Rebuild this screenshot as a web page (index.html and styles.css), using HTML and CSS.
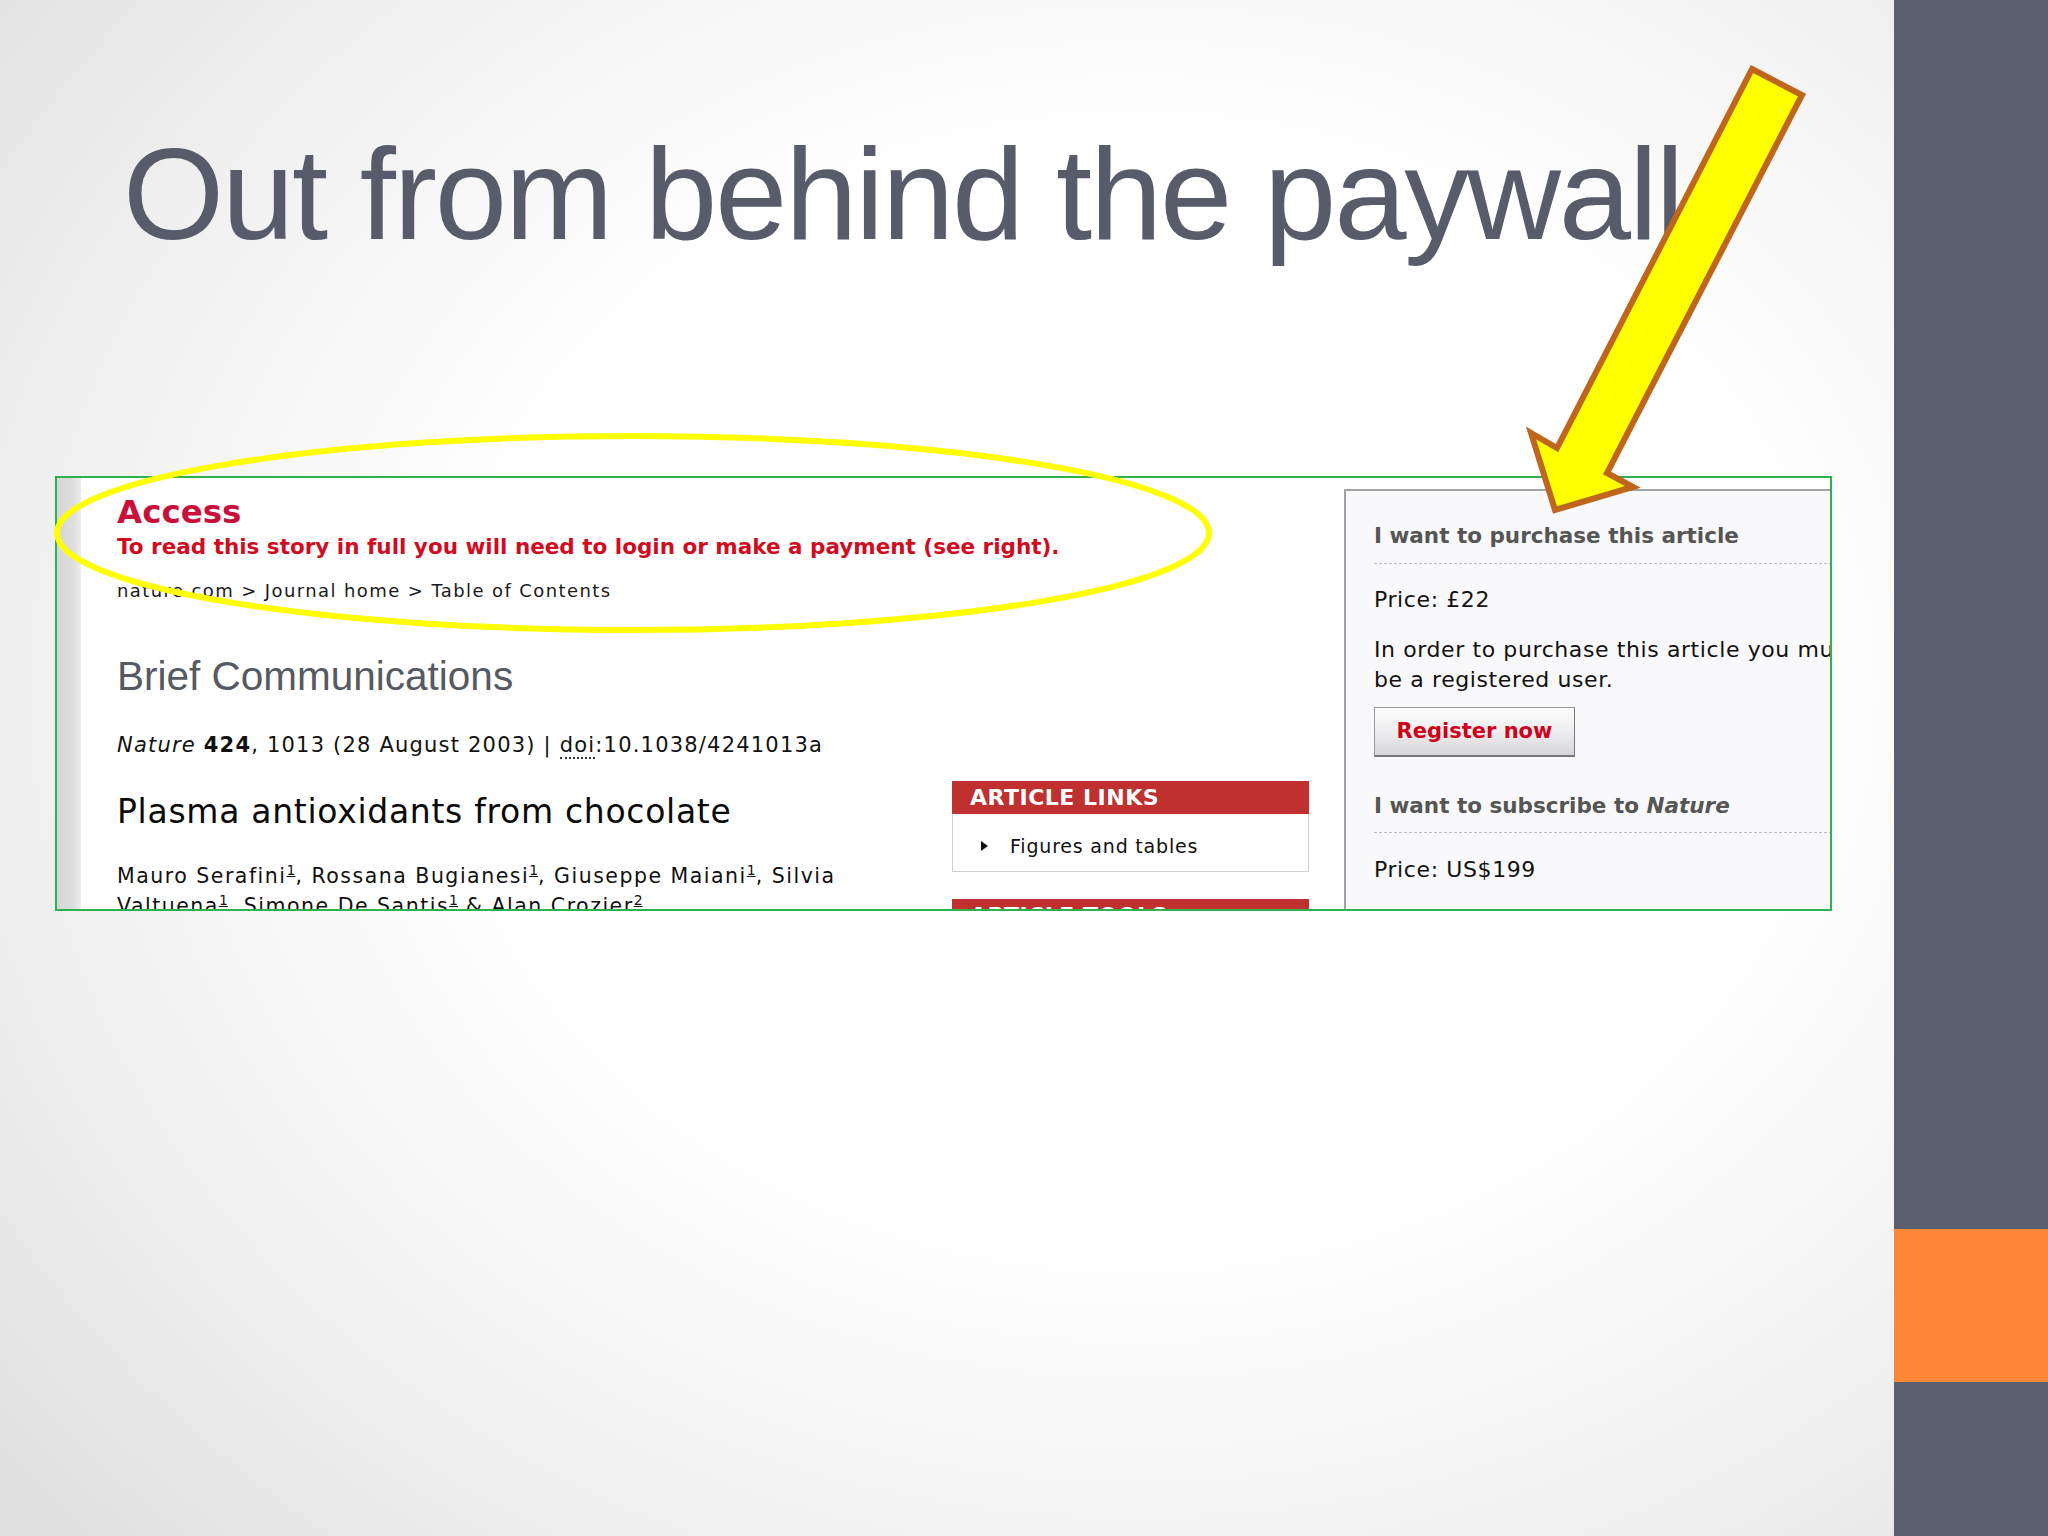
FILE: index.html
```html
<!DOCTYPE html>
<html>
<head>
<meta charset="utf-8">
<title>Out from behind the paywall</title>
<link rel="stylesheet" href="styles.css">
</head>
<body>
<div class="slide">
  <div class="stage">
    <h1 class="title">Out from behind the paywall</h1>
    <div class="shot">
      <div class="strip"></div>
      <div class="main">
        <div class="access">Access</div>
        <div class="access-msg">To read this story in full you will need to login or make a payment (see right).</div>
        <div class="crumbs">nature.com &gt; Journal home &gt; Table of Contents</div>
        <div class="section">Brief Communications</div>
        <div class="cite"><i>Nature</i> <b>424</b>, 1013 (28 August 2003) | <span class="abbr">doi</span>:10.1038/4241013a</div>
        <div class="article-row">
          <div class="article-col">
            <div class="art-title">Plasma antioxidants from chocolate</div>
            <div class="authors">Mauro Serafini<sup class="ref">1</sup>, Rossana Bugianesi<sup class="ref">1</sup>, Giuseppe Maiani<sup class="ref">1</sup>, Silvia Valtuena<sup class="ref">1</sup>, Simone De Santis<sup class="ref">1</sup> &amp; Alan Crozier<sup class="ref">2</sup></div>
          </div>
          <div class="links-col">
            <div class="box-head">ARTICLE LINKS</div>
            <div class="box-body"><div class="bullet">Figures and tables</div></div>
            <div class="box-head second">ARTICLE TOOLS</div>
          </div>
        </div>
      </div>
      <div class="panel">
        <div class="panel-head">I want to purchase this article</div>
        <div class="price first">Price: £22</div>
        <p class="note">In order to purchase this article you must be a registered user.</p>
        <div class="btn">Register now</div>
        <div class="panel-head sub">I want to subscribe to <i>Nature</i></div>
        <div class="price">Price: US$199</div>
      </div>
    </div>
    <svg class="overlay" width="1894" height="1536" viewBox="0 0 1894 1536">
      <ellipse cx="633" cy="533" rx="576" ry="97" fill="none" stroke="#ffff00" stroke-width="6"/>
      <polygon points="1752,69 1802,95 1607,473 1633,487 1555,510 1531,433 1557,448" fill="#ffff00" stroke="#bf661c" stroke-width="6" stroke-linejoin="miter"/>
    </svg>
  </div>
  <div class="sidebar">
    <div class="bar-top"></div>
    <div class="bar-accent"></div>
    <div class="bar-bottom"></div>
  </div>
</div>
</body>
</html>
```

FILE: styles.css
```css
html, body {
  margin: 0;
  padding: 0;
}
body {
  width: 2048px;
  height: 1536px;
  overflow: hidden;
  font-family: "DejaVu Sans", Verdana, sans-serif;
}
.slide {
  width: 2048px;
  height: 1536px;
  display: grid;
  grid-template-columns: 1894px 154px;
}
.stage {
  position: relative;
  background: radial-gradient(ellipse 78% 80% at 60% 45%, #ffffff 45%, #f2f2f2 72%, #e0e0e0 100%);
  padding-top: 129px;
  box-sizing: border-box;
  overflow: hidden;
}
.title {
  margin: 0;
  padding-left: 123px;
  height: 130px;
  font-family: "Liberation Sans", Arial, sans-serif;
  font-weight: normal;
  font-size: 130px;
  line-height: 130px;
  letter-spacing: -2.2px;
  color: #575b6a;
  white-space: nowrap;
}
.shot {
  margin-top: 217px;
  margin-left: 55px;
  width: 1777px;
  height: 435px;
  box-sizing: border-box;
  border: 2px solid #2db24e;
  background: #ffffff;
  display: flex;
  overflow: hidden;
}
.strip {
  flex: none;
  width: 24px;
  background: linear-gradient(to right, #d6d6d6, #dedede 70%, #eeeeee);
}
.main {
  flex: none;
  width: 1228px;
  box-sizing: border-box;
  padding-left: 36px;
  padding-top: 16px;
  color: #111;
}
.access {
  font-weight: bold;
  font-size: 32.5px;
  line-height: 36px;
  color: #c8103a;
}
.access-msg {
  margin-top: 4px;
  font-weight: bold;
  font-size: 21.5px;
  line-height: 26px;
  color: #d20c1e;
  white-space: nowrap;
}
.crumbs {
  margin-top: 19px;
  font-size: 18px;
  letter-spacing: 1.4px;
  line-height: 24px;
  color: #1a1a1a;
  white-space: nowrap;
}
.section {
  margin-top: 50px;
  font-family: "Liberation Sans", Arial, sans-serif;
  font-size: 40.5px;
  line-height: 46px;
  color: #555a62;
}
.cite {
  margin-top: 33px;
  font-size: 21px;
  letter-spacing: 1.2px;
  line-height: 26px;
  color: #111;
  white-space: nowrap;
}
.abbr {
  border-bottom: 2px dotted #333;
}
.article-row {
  margin-top: 23px;
  display: flex;
  gap: 75px;
}
.article-col {
  flex: none;
  width: 760px;
  padding-top: 13px;
}
.art-title {
  font-size: 33px;
  letter-spacing: 0.7px;
  line-height: 36px;
  color: #0a0a0a;
  white-space: nowrap;
}
.authors {
  margin-top: 31px;
  font-size: 20.5px;
  letter-spacing: 1.5px;
  line-height: 30px;
  color: #111;
}
.ref {
  font-size: 14px;
  line-height: 0;
  letter-spacing: 0;
  text-decoration: underline;
}
.links-col {
  flex: none;
  width: 357px;
}
.box-head {
  height: 33px;
  line-height: 33px;
  padding-left: 18px;
  background: #c0302f;
  color: #ffffff;
  font-weight: bold;
  font-size: 22px;
  letter-spacing: 0.5px;
  white-space: nowrap;
}
.box-head.second {
  margin-top: 27px;
}
.box-body {
  height: 58px;
  box-sizing: border-box;
  border: 1px solid #cfcfcf;
  border-top: none;
  padding: 20px 0 0 28px;
}
.bullet {
  display: flex;
  align-items: center;
  gap: 22px;
  font-size: 19px;
  letter-spacing: 0.8px;
  line-height: 24px;
  color: #111;
}
.bullet::before {
  content: "";
  width: 0;
  height: 0;
  border-top: 5px solid transparent;
  border-bottom: 5px solid transparent;
  border-left: 7px solid #111;
}
.panel {
  flex: none;
  align-self: flex-start;
  margin-left: 35px;
  margin-top: 11px;
  width: 580px;
  height: 500px;
  box-sizing: border-box;
  border: 2px solid #a3a3a3;
  background: #f9f9fb;
  padding: 32px 0 0 28px;
  color: #111;
}
.panel-head {
  font-weight: bold;
  font-size: 21.5px;
  line-height: 26px;
  color: #555555;
  padding-bottom: 14px;
  border-bottom: 1px dashed #bdbdbd;
  white-space: nowrap;
}
.panel-head.sub {
  margin-top: 36px;
  padding-bottom: 13px;
}
.price {
  font-size: 22px;
  letter-spacing: 0.6px;
  line-height: 26px;
  margin-top: 24px;
}
.price.first {
  margin-top: 23px;
}
.note {
  margin: 22px 0 0 0;
  width: 505px;
  font-size: 22px;
  letter-spacing: 0.6px;
  line-height: 30px;
}
.btn {
  margin-top: 12px;
  width: 201px;
  height: 50px;
  box-sizing: border-box;
  border: 1px solid #9a9a9a;
  border-right-color: #777;
  border-bottom: 2px solid #777;
  background: linear-gradient(#fdfdfd, #ececee 55%, #d5d5d9);
  color: #d0021b;
  font-weight: bold;
  font-size: 21px;
  line-height: 46px;
  text-align: center;
}
.overlay {
  position: absolute;
  left: 0;
  top: 0;
  pointer-events: none;
}
.sidebar {
  display: flex;
  flex-direction: column;
}
.bar-top {
  height: 1229px;
  background: #5a5e6e;
}
.bar-accent {
  height: 153px;
  background: #fd8637;
}
.bar-bottom {
  flex: 1;
  background: #5a5e6e;
}
```
